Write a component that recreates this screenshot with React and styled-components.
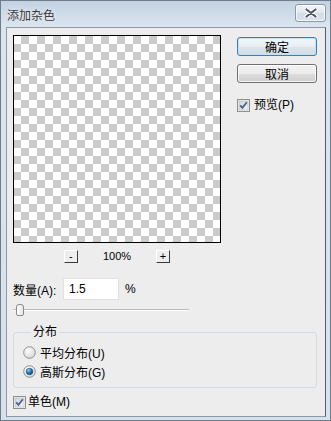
import React from 'react';
import styled, { createGlobalStyle } from 'styled-components';

const Global = createGlobalStyle`
  html, body { margin: 0; padding: 0; }
  body {
    font-family: "Liberation Sans", "Noto Sans CJK SC", sans-serif;
    font-size: 12px;
    color: #000;
  }
`;

const Window = styled.div`
  width: 331px;
  height: 421px;
  box-sizing: border-box;
  border: 1px solid #6f7c8a;
  background: linear-gradient(#c3d2e2 0px, #dbe5ef 26px, #d7e1ec 100%);
  display: flex;
  flex-direction: column;
  padding: 0 4px 3px 5px;
`;

const TitleBar = styled.div`
  height: 26px;
  flex: none;
  display: flex;
  align-items: center;
  justify-content: space-between;
  padding-left: 1px;
`;

const Title = styled.span`
  font-family: "Noto Sans CJK SC", sans-serif;
  font-size: 12px;
  color: #3a3a3a;
  text-shadow: 0 0 4px rgba(255, 255, 255, 0.9);
  margin-top: 1px;
`;

const CloseBtn = styled.div`
  align-self: flex-start;
  margin-top: 3px;
  width: 31px;
  height: 18px;
  box-sizing: border-box;
  border: 1px solid #8c98a6;
  border-radius: 3px;
  background: linear-gradient(#f0f4f8, #dfe7ef 50%, #d3dce6 51%, #dbe3ec);
  box-shadow: inset 0 0 0 1px rgba(255, 255, 255, 0.7);
  display: flex;
  align-items: center;
  justify-content: center;
`;

const Panel = styled.div`
  flex: 1;
  box-sizing: border-box;
  border: 1px solid #8d99a6;
  border-right-color: #545c66;
  background: #ededed;
  padding: 7px 0 0 6px;
  display: flex;
  flex-direction: column;
`;

const TopRow = styled.div`
  display: flex;
  gap: 16px;
  align-items: flex-start;
`;

const LeftCol = styled.div`
  width: 208px;
  display: flex;
  flex-direction: column;
`;

const Preview = styled.div`
  width: 208px;
  height: 208px;
  box-sizing: border-box;
  border: 1px solid #000;
  background-color: #fff;
  background-image: conic-gradient(#cbcbcb 25%, #fff 0 50%, #cbcbcb 0 75%, #fff 0);
  background-size: 16px 16px;
  background-position: -1px 0;
`;

const ZoomRow = styled.div`
  margin-top: 7px;
  height: 13px;
  display: flex;
  align-items: center;
  justify-content: center;
  gap: 25px;
`;

const ZoomBtn = styled.div`
  width: 14px;
  height: 13px;
  box-sizing: border-box;
  border: 1px solid;
  border-color: #ffffff #3a3a3a #3a3a3a #ffffff;
  background: #eeeeee;
  font-size: 11px;
  line-height: 10px;
  text-align: center;
  color: #000;
`;

const ZoomText = styled.span`
  font-size: 11px;
  line-height: 13px;
`;

const ButtonCol = styled.div`
  width: 80px;
  padding-top: 2px;
  display: flex;
  flex-direction: column;
`;

const Button = styled.div`
  height: 19px;
  box-sizing: border-box;
  margin-top: ${(p) => p.$mt || 0}px;
  border: 1px solid ${(p) => (p.$default ? '#3c7fb1' : '#707070')};
  border-radius: 3px;
  background: ${(p) =>
    p.$default
      ? 'linear-gradient(#f3f7fa, #e8eef3 50%, #dce5ec 51%, #d3dde6)'
      : 'linear-gradient(#f2f2f2, #ebebeb 50%, #dddddd 51%, #cfcfcf)'};
  box-shadow: inset 0 0 0 1px ${(p) => (p.$default ? '#bfe2f6' : 'rgba(255,255,255,0.8)')};
  display: flex;
  align-items: center;
  justify-content: center;
  font-family: "Noto Sans CJK SC", sans-serif;
  font-size: 12px;
  line-height: 1;
`;

const CheckRow = styled.div`
  display: flex;
  align-items: center;
  gap: ${(p) => p.$gap}px;
  margin-top: ${(p) => p.$mt || 0}px;
  height: 13px;
  line-height: 13px;
`;

const AmountRow = styled.div`
  margin-top: 15px;
  height: 22px;
  display: flex;
  align-items: center;
`;

const Label = styled.span`
  width: 50px;
  flex: none;
`;

const Input = styled.div`
  width: 56px;
  height: 22px;
  box-sizing: border-box;
  border: 1px solid #e2e2e2;
  background: #fff;
  padding-left: 5px;
  line-height: 20px;
`;

const Percent = styled.span`
  margin-left: 6px;
`;

const Slider = styled.div`
  position: relative;
  margin-top: 3px;
  width: 176px;
  height: 14px;
  &::before {
    content: '';
    position: absolute;
    left: 0;
    right: 0;
    top: 6px;
    height: 1px;
    background: #b9b9b9;
    border-bottom: 1px solid #ffffff;
  }
`;

const Thumb = styled.div`
  position: absolute;
  top: 1px;
  width: 8px;
  height: 12px;
  box-sizing: border-box;
  border: 1px solid #8a8a8a;
  border-radius: 3px 3px 2px 2px;
  background: linear-gradient(90deg, #ffffff, #e4e4e4);
`;

const Group = styled.fieldset`
  margin: 8px 0 0;
  width: 304px;
  box-sizing: border-box;
  border: 1px solid #d2dbe1;
  border-radius: 3px;
  padding: 4px 0 6px 9px;
  min-width: 0;
`;

const Legend = styled.legend`
  margin-left: 8px;
  padding: 0 2px;
  line-height: 14px;
`;

const RadioRow = styled.div`
  height: 19px;
  display: flex;
  align-items: center;
  gap: 4px;
`;

const Checkbox = () => (
  <svg width="13" height="13" viewBox="0 0 13 13">
    <defs>
      <linearGradient id="cbg" x1="0" y1="0" x2="1" y2="1">
        <stop offset="0" stopColor="#cfd3d8" />
        <stop offset="1" stopColor="#f7f7f7" />
      </linearGradient>
    </defs>
    <rect x="0.5" y="0.5" width="12" height="12" fill="#f6f6f6" stroke="#8e8f8f" />
    <rect x="2" y="2" width="9" height="9" fill="url(#cbg)" stroke="#aeb2b7" strokeWidth="0.6" />
    <path d="M3.2 6.4 L5.4 8.9 L9.8 3.2" fill="none" stroke="#4b5f91" strokeWidth="1.8" />
  </svg>
);

const Radio = ({ checked }) => (
  <svg width="13" height="13" viewBox="0 0 13 13">
    <defs>
      <radialGradient id="rbg" cx="0.35" cy="0.3" r="0.8">
        <stop offset="0" stopColor="#ffffff" />
        <stop offset="1" stopColor="#d4d4d4" />
      </radialGradient>
      <radialGradient id="rdot" cx="0.35" cy="0.3" r="0.8">
        <stop offset="0" stopColor="#8fd0f0" />
        <stop offset="0.5" stopColor="#2a7bb0" />
        <stop offset="1" stopColor="#0c3f66" />
      </radialGradient>
    </defs>
    <circle cx="6.5" cy="6.5" r="5.8" fill="url(#rbg)" stroke="#8e8f8f" strokeWidth="1" />
    {checked && <circle cx="6.5" cy="6.5" r="3.3" fill="url(#rdot)" stroke="#1d4f78" strokeWidth="0.6" />}
  </svg>
);

export default function App() {
  return (
    <>
      <Global />
      <Window>
        <TitleBar>
          <Title>添加杂色</Title>
          <CloseBtn>
            <svg width="14" height="10" viewBox="0 0 14 10">
              <path d="M2.5 1.5 L11.5 8.5 M11.5 1.5 L2.5 8.5" stroke="#ffffff" strokeWidth="4.2" strokeLinecap="round" />
              <path d="M2.5 1.5 L11.5 8.5 M11.5 1.5 L2.5 8.5" stroke="#4f5862" strokeWidth="2.2" strokeLinecap="round" />
            </svg>
          </CloseBtn>
        </TitleBar>
        <Panel>
          <TopRow>
            <LeftCol>
              <Preview />
              <ZoomRow>
                <ZoomBtn>-</ZoomBtn>
                <ZoomText>100%</ZoomText>
                <ZoomBtn>+</ZoomBtn>
              </ZoomRow>
            </LeftCol>
            <ButtonCol>
              <Button $default>确定</Button>
              <Button $mt={8}>取消</Button>
              <CheckRow $gap={4} $mt={16}>
                <Checkbox />
                <span>预览(P)</span>
              </CheckRow>
            </ButtonCol>
          </TopRow>
          <AmountRow>
            <Label>数量(A):</Label>
            <Input>1.5</Input>
            <Percent>%</Percent>
          </AmountRow>
          <Slider>
            <Thumb style={{ left: 3 }} />
          </Slider>
          <Group>
            <Legend>分布</Legend>
            <RadioRow>
              <Radio />
              <span>平均分布(U)</span>
            </RadioRow>
            <RadioRow>
              <Radio checked />
              <span>高斯分布(G)</span>
            </RadioRow>
          </Group>
          <CheckRow $gap={2} $mt={8}>
            <Checkbox />
            <span>单色(M)</span>
          </CheckRow>
        </Panel>
      </Window>
    </>
  );
}
